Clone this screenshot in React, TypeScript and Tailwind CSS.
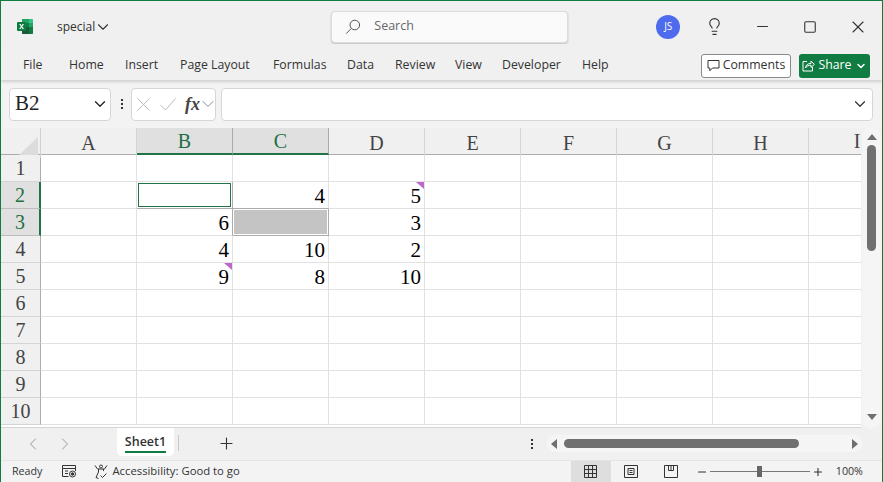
import { ChevronDown, ChevronLeft, ChevronRight, Lightbulb, Minus, Plus, Square, X } from "lucide-react"

const tabs = [
  { name: "File", cls: "w-[46px]" },
  { name: "Home", cls: "w-[56px]" },
  { name: "Insert", cls: "w-[55px]" },
  { name: "Page Layout", cls: "w-[93px]" },
  { name: "Formulas", cls: "w-[74px]" },
  { name: "Data", cls: "w-[48px]" },
  { name: "Review", cls: "w-[60px]" },
  { name: "View", cls: "w-[47px]" },
  { name: "Developer", cls: "w-[80px]" },
  { name: "Help", cls: "w-[40px]" },
]

const columns = ["A", "B", "C", "D", "E", "F", "G", "H"]

const data: Record<string, string> = {
  C2: "4",
  D2: "5",
  B3: "6",
  D3: "3",
  B4: "4",
  C4: "10",
  D4: "2",
  B5: "9",
  C5: "8",
  D5: "10",
}

const notes = ["D2", "B5"]
// gridlines drawn darker around the selected ranges
const darkBottom = ["B2", "C2", "C3"]
const darkRight = ["B2", "B3", "C3"]

function ExcelLogo() {
  return (
    <svg width="17" height="17" viewBox="0 0 17 17">
      <path d="M5 1h7v4H5z" fill="#21a366" />
      <path d="M12 1h3.2c.5 0 .8.3.8.8V5h-4z" fill="#33c481" />
      <path d="M5 5h7v4H5z" fill="#107c41" />
      <path d="M12 5h4v4h-4z" fill="#21a366" />
      <path d="M5 9h7v7H5.8c-.5 0-.8-.3-.8-.8z" fill="#185c37" />
      <path d="M12 9h4v6.2c0 .5-.3.8-.8.8H12z" fill="#107c41" />
      <rect x="0" y="4" width="9" height="9" rx="1" fill="#107c41" />
      <path d="M2.2 6h1.4l1 1.7L5.6 6H7L5.3 8.5 7 11H5.6l-1-1.7-1 1.7H2.2l1.7-2.5z" fill="#fff" />
    </svg>
  )
}

function SearchIcon() {
  return (
    <svg width="16" height="16" viewBox="0 0 16 16" fill="none" stroke="#555" strokeWidth="1">
      <circle cx="9.8" cy="6" r="4.8" />
      <path d="M6.4 9.4 1.2 14.6" />
    </svg>
  )
}

function ShareIcon() {
  return (
    <svg width="13" height="13" viewBox="0 0 13 13" fill="none" stroke="#fff" strokeWidth="1">
      <path d="M5 2.5H1v9.5h9.5V8" />
      <path d="M3.5 9c.3-3 2.2-4.6 5.5-4.6V2l3.3 3.4L9 8.500V6.200C6.500 6.200 4.800 7 3.500 9z" />
    </svg>
  )
}

function CommentIcon() {
  return (
    <svg width="13" height="13" viewBox="0 0 13 13" fill="none" stroke="#333" strokeWidth="1">
      <path d="M1 1.500h11v7.500H5.500L2.800 11.800V9H1z" />
    </svg>
  )
}

function Dots({ className }: { className?: string }) {
  return (
    <div className={"flex flex-col gap-[2px] " + (className ?? "")}>
      <div className="w-[2px] h-[2px] bg-[#333]" />
      <div className="w-[2px] h-[2px] bg-[#333]" />
      <div className="w-[2px] h-[2px] bg-[#333]" />
    </div>
  )
}

function Cell({ id }: { id: string }) {
  return (
    <div
      className={
        "relative h-[27px] border-r border-b flex items-end justify-end pr-[3px] text-[21px] leading-[24px] text-black " +
        (darkBottom.includes(id) ? "border-b-[#ababab] " : "border-b-[#e1e1e1] ") +
        (darkRight.includes(id) ? "border-r-[#ababab]" : "border-r-[#e1e1e1]")
      }
    >
      {id === "B2" && <div className="absolute inset-[1px] border border-[#217346]" />}
      {id === "C3" && <div className="absolute inset-[1px] bg-[#c4c4c4]" />}
      {notes.includes(id) && (
        <div className="absolute right-0 top-0 w-[8px] h-[7px] bg-[#bb68c8] [clip-path:polygon(0_0,100%_0,100%_100%)]" />
      )}
      {data[id]}
    </div>
  )
}

function SheetRow({ row }: { row: number }) {
  const selected = row === 2 || row === 3
  return (
    <div className="grid grid-cols-[40px_repeat(8,96px)_52px]">
      <div
        className={
          "h-[27px] border-b border-r flex items-center justify-center text-[20px] leading-none " +
          (selected
            ? "bg-[#e0e0e0] border-b-[#bdbdbd] border-r-2 border-r-[#217346] text-[#1d6f42]"
            : "bg-[#f0f0f0] border-b-[#d4d4d4] border-r-[#ababab] text-[#444]")
        }
      >
        {row}
      </div>
      {columns.map((c) => (
        <Cell key={c} id={c + row} />
      ))}
      <div className="h-[27px] border-b border-[#e1e1e1]" />
    </div>
  )
}

export default function App() {
  return (
    <div className="w-[883px] h-[482px] overflow-hidden bg-[#f0f0f0] border-t border-x border-[#107c41] flex flex-col font-['Open_Sans','Noto_Sans',sans-serif] text-[#333]">
      {/* Title bar */}
      <div className="h-[43px] pt-[8px] flex items-center shrink-0">
        <div className="ml-[16px] w-[17px] h-[17px]">
          <ExcelLogo />
        </div>
        <span className="ml-[23px] text-[12px]">special</span>
        <ChevronDown size={18} strokeWidth={1.1} absoluteStrokeWidth className="ml-[-1px]" />
        <div className="ml-[219px] w-[237px] h-[32px] bg-[#fafafa] border border-[#dcdcdc] rounded-[4px] shadow-[0_1px_2px_rgba(0,0,0,0.2)] flex items-center pl-[13px] shrink-0">
          <SearchIcon />
          <span className="ml-[13px] text-[12.5px] text-[#666]">Search</span>
        </div>
        <div className="ml-[88px] w-[24px] h-[24px] rounded-full bg-[#4f6bed] text-white text-[10px] flex items-center justify-center shrink-0">
          JS
        </div>
        <Lightbulb size={19} strokeWidth={1.1} absoluteStrokeWidth className="ml-[25px] shrink-0" />
        <Minus size={17} strokeWidth={1.1} absoluteStrokeWidth className="ml-[30px] shrink-0" />
        <Square size={14} strokeWidth={1.1} absoluteStrokeWidth className="ml-[32px] shrink-0" />
        <X size={20} strokeWidth={1.1} absoluteStrokeWidth className="ml-[31px] shrink-0" />
      </div>

      {/* Ribbon tabs */}
      <div className="h-[36px] pt-[7px] flex items-center shrink-0 shadow-[0_2px_3px_rgba(0,0,0,0.15)] z-10 bg-[#f0f0f0]">
        <div className="ml-[22px] flex items-center text-[12.3px] text-[#333]">
          {tabs.map((t) => (
            <span key={t.name} className={t.cls}>
              {t.name}
            </span>
          ))}
        </div>
        <div className="ml-[79px] w-[90px] h-[24px] border border-[#8a8a8a] rounded-[3px] bg-white flex items-center justify-center gap-[3px] text-[12.3px] shrink-0">
          <CommentIcon />
          Comments
        </div>
        <div className="ml-[8px] w-[71px] h-[24px] rounded-[3px] bg-[#107c41] text-white flex items-center justify-center gap-[3px] text-[12.3px] shrink-0">
          <ShareIcon />
          Share
          <ChevronDown size={12} strokeWidth={1.5} absoluteStrokeWidth />
        </div>
      </div>

      {/* Formula bar */}
      <div className="h-[48px] flex items-center shrink-0 bg-[#f3f3f3]">
        <div className="ml-[8px] w-[102px] h-[33px] bg-white border border-[#d6d6d6] rounded-[4px] flex items-center justify-between pl-[5px] pr-[1px] font-['Liberation_Serif',serif] text-[21px] text-[#222] shrink-0">
          B2
          <ChevronDown size={18} strokeWidth={1.3} absoluteStrokeWidth />
        </div>
        <Dots className="ml-[10px]" />
        <div className="ml-[8px] w-[85px] h-[33px] bg-white border border-[#d6d6d6] rounded-[4px] flex items-center pl-[5px] shrink-0">
          <svg width="13" height="13" viewBox="0 0 13 13" fill="none" stroke="#bbb" strokeWidth="1" className="shrink-0">
            <path d="M.5.5l12 12M12.5.5l-12 12" />
          </svg>
          <svg width="16" height="13" viewBox="0 0 16 13" fill="none" stroke="#bbb" strokeWidth="1" className="ml-[10px] shrink-0">
            <path d="M.5 7l5 5L15.500.5" />
          </svg>
          <span className="ml-[9px] font-['Liberation_Serif',serif] italic font-bold text-[18px] leading-none text-[#444]">fx</span>
          <ChevronDown size={20} strokeWidth={1} absoluteStrokeWidth className="ml-[-2px] shrink-0 text-[#888]" />
        </div>
        <div className="ml-[5px] w-[652px] h-[33px] bg-white border border-[#d6d6d6] rounded-[4px] flex items-center justify-end pr-[3px] shrink-0">
          <ChevronDown size={18} strokeWidth={1.2} absoluteStrokeWidth />
        </div>
      </div>

      {/* Sheet */}
      <div className="h-[300px] flex shrink-0 bg-[#f0f0f0] font-['Liberation_Serif',serif]">
        <div className="w-[860px] overflow-hidden bg-white shrink-0 border-b border-[#d4d4d4]">
          <div className="grid grid-cols-[40px_repeat(8,96px)_52px] h-[27px] text-[20px] text-[#444] bg-[#f0f0f0] border-b border-[#ababab]">
            <div className="relative border-r border-[#d0d0d0]">
              <div className="absolute right-[2px] bottom-[3px] w-[19px] h-[18px] bg-[#dcdcdc] [clip-path:polygon(100%_0,100%_100%,0_100%)]" />
            </div>
            {columns.map((c) => (
              <div
                key={c}
                className={
                  "flex items-center justify-center border-r " +
                  (c === "B" || c === "C"
                    ? "bg-[#e0e0e0] border-[#ababab] text-[#1d6f42] border-b-2 border-b-[#217346] h-[27px]"
                    : "border-[#d4d4d4]")
                }
              >
                {c}
              </div>
            ))}
            <div className="overflow-hidden">
              <div className="w-[96px] h-[26px] flex items-center justify-center">I</div>
            </div>
          </div>
          {[1, 2, 3, 4, 5, 6, 7, 8, 9, 10].map((r) => (
            <SheetRow key={r} row={r} />
          ))}
        </div>
        {/* Vertical scrollbar */}
        <div className="ml-[1px] w-[19px] bg-[#f5f5f5] rounded-[8px] flex flex-col items-center pt-[6px] pb-[8px] h-[300px]">
          <div className="w-0 h-0 border-x-[5px] border-x-transparent border-b-[6px] border-b-[#6f6f6f]" />
          <div className="mt-[5px] w-[9px] h-[106px] rounded-[5px] bg-[#707070]" />
          <div className="mt-auto w-0 h-0 border-x-[5px] border-x-transparent border-t-[6px] border-t-[#6f6f6f]" />
        </div>
      </div>

      {/* Sheet tabs */}
      <div className="h-[32px] flex items-start shrink-0">
        <ChevronLeft size={20} strokeWidth={1} absoluteStrokeWidth className="ml-[22px] mt-[6px] shrink-0 text-[#999]" />
        <ChevronRight size={20} strokeWidth={1} absoluteStrokeWidth className="ml-[12px] mt-[6px] shrink-0 text-[#999]" />
        <div className="ml-[42px] w-[57px] h-[28px] bg-white rounded-b-[5px] flex flex-col items-center pt-[4px] shrink-0">
          <span className="text-[12.5px] font-semibold leading-[19px] text-[#333]">Sheet1</span>
          <div className="w-[41px] h-[2px] bg-[#107c41]" />
        </div>
        <div className="ml-[4px] mt-[7px] w-[1px] h-[16px] bg-[#c8c8c8] shrink-0" />
        <Plus size={19} strokeWidth={1.1} absoluteStrokeWidth className="ml-[38px] mt-[6px] shrink-0" />
        <Dots className="ml-[295px] mt-[11px] shrink-0" />
        <div className="ml-[14px] mt-[7px] w-[315px] h-[17px] rounded-[8px] bg-[#f5f5f5] flex items-center px-[4px] shrink-0">
          <div className="w-0 h-0 border-y-[5px] border-y-transparent border-r-[6px] border-r-[#6f6f6f]" />
          <div className="ml-[7px] w-[235px] h-[9px] rounded-[5px] bg-[#707070]" />
          <div className="ml-auto w-0 h-0 border-y-[5px] border-y-transparent border-l-[6px] border-l-[#6f6f6f]" />
        </div>
      </div>

      {/* Status bar */}
      <div className="h-[22px] flex items-center shrink-0 bg-[#f3f3f3] border-t border-[#e4e4e4] text-[10.7px] text-[#333]">
        <span className="ml-[11px]">Ready</span>
        <svg width="15" height="13" viewBox="0 0 15 13" fill="none" stroke="#333" strokeWidth="1" className="ml-[20px] shrink-0">
          <path d="M.5.5h13v3H.5zM.5 3.500v8h6M3 6h3M3 8.500h3M13.500 3.500V6" />
          <circle cx="10.500" cy="9" r="3" />
          <circle cx="10.500" cy="9" r="1.200" fill="#333" />
        </svg>
        <svg width="14" height="15" viewBox="0 0 14 15" fill="none" stroke="#333" strokeWidth="1" className="ml-[17px] shrink-0">
          <circle cx="7" cy="2.500" r="1.500" />
          <path d="M1 1.500 3.500 5h7L13 1.500M4.500 5v3L2 13.500l2.500 1M9.500 5v2" />
          <path d="M6.500 11.500l2 2 4-4" />
        </svg>
        <span className="ml-[4px] text-[11.3px]">Accessibility: Good to go</span>
        <div className="ml-[331px] w-[40px] h-[21px] bg-[#dedede] flex items-center justify-center shrink-0">
          <svg width="13" height="13" viewBox="0 0 13 13" fill="none" stroke="#333" strokeWidth="1">
            <path d="M.5.5h12v12H.5zM.5 4.500h12M.5 8.500h12M4.500.5v12M8.500.5v12" />
          </svg>
        </div>
        <svg width="14" height="13" viewBox="0 0 14 13" fill="none" stroke="#333" strokeWidth="1" className="ml-[13px] shrink-0">
          <path d="M.5.5h13v12H.5zM4 3.500h6v6H4zM5.500 5.500h3M5.500 7.500h3" />
        </svg>
        <svg width="14" height="13" viewBox="0 0 14 13" fill="none" stroke="#333" strokeWidth="1" className="ml-[26px] shrink-0">
          <path d="M.5.500h13v12H.5zM4.500.5v5h5v-5M7 .5v5" />
        </svg>
        <Minus size={12} strokeWidth={1.1} absoluteStrokeWidth className="ml-[18px] shrink-0" />
        <div className="ml-[2px] w-[100px] h-[1px] bg-[#777] flex items-center justify-center shrink-0">
          <div className="w-[5px] h-[11px] bg-[#666] shrink-0" />
        </div>
        <Plus size={12} strokeWidth={1.1} absoluteStrokeWidth className="ml-[2px] shrink-0" />
        <span className="ml-[12px]">100%</span>
      </div>
    </div>
  )
}
